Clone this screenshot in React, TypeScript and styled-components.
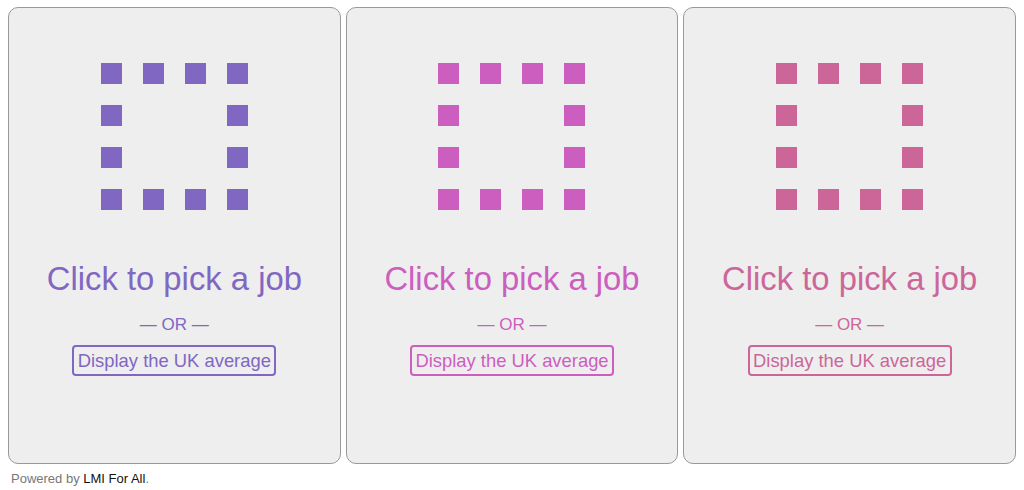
import * as React from 'react';
import styled, { createGlobalStyle } from 'styled-components';

const GlobalStyle = createGlobalStyle`
  html, body {
    margin: 0;
    padding: 0;
    background: #fff;
    font-family: "Liberation Sans", Arial, sans-serif;
  }
`;

const PANELS = [
  { color: '#7f67c2' },
  { color: '#cc5ebf' },
  { color: '#cc6699' },
];

const Page = styled.div`
  padding: 7px 8px 0 8px;
`;

const Row = styled.div`
  display: grid;
  grid-template-columns: repeat(3, 1fr);
  gap: 5px;
`;

const Panel = styled.div<{ $color: string }>`
  height: 457px;
  box-sizing: border-box;
  background: #eeeeee;
  border: 1px solid #999;
  border-radius: 10px;
  display: flex;
  flex-direction: column;
  align-items: center;
  padding-top: 55px;
  color: ${(p) => p.$color};
  cursor: pointer;
`;

const Dots = styled.div`
  display: grid;
  grid-template-columns: repeat(4, 21px);
  grid-auto-rows: 21px;
  gap: 21px;
`;

const Dot = styled.span<{ $color: string; $hidden?: boolean }>`
  display: block;
  background: ${(p) => (p.$hidden ? 'transparent' : p.$color)};
`;

const Title = styled.div`
  margin-top: 50px;
  font-size: 32.8px;
  line-height: 38px;
`;

const Or = styled.div`
  margin-top: 17px;
  font-size: 17px;
  line-height: 20px;
`;

const AverageButton = styled.button<{ $color: string }>`
  margin-top: 10px;
  font-family: "Liberation Sans", Arial, sans-serif;
  font-size: 18.4px;
  line-height: 21px;
  color: ${(p) => p.$color};
  background: transparent;
  border: 2px solid ${(p) => p.$color};
  border-radius: 4px;
  padding: 3px 3.5px;
  cursor: pointer;
`;

const Footer = styled.div`
  padding: 7px 0 0 3px;
  font-size: 13px;
  line-height: 16px;
  color: #777;
`;

const Link = styled.a`
  color: #111;
  text-decoration: none;
`;

const isEdge = (i: number) => {
  const r = Math.floor(i / 4);
  const c = i % 4;
  return r === 0 || r === 3 || c === 0 || c === 3;
};

const JobPicker = ({ color }: { color: string }) => (
  <Panel $color={color}>
    <Dots>
      {Array.from({ length: 16 }, (_, i) => (
        <Dot key={i} $color={color} $hidden={!isEdge(i)} />
      ))}
    </Dots>
    <Title>Click to pick a job</Title>
    <Or>— OR —</Or>
    <AverageButton $color={color}>Display the UK average</AverageButton>
  </Panel>
);

const App = () => (
  <Page>
    <GlobalStyle />
    <Row>
      {PANELS.map((p) => (
        <JobPicker key={p.color} color={p.color} />
      ))}
    </Row>
    <Footer>
      Powered by <Link href="#">LMI For All</Link>.
    </Footer>
  </Page>
);

export default App;
